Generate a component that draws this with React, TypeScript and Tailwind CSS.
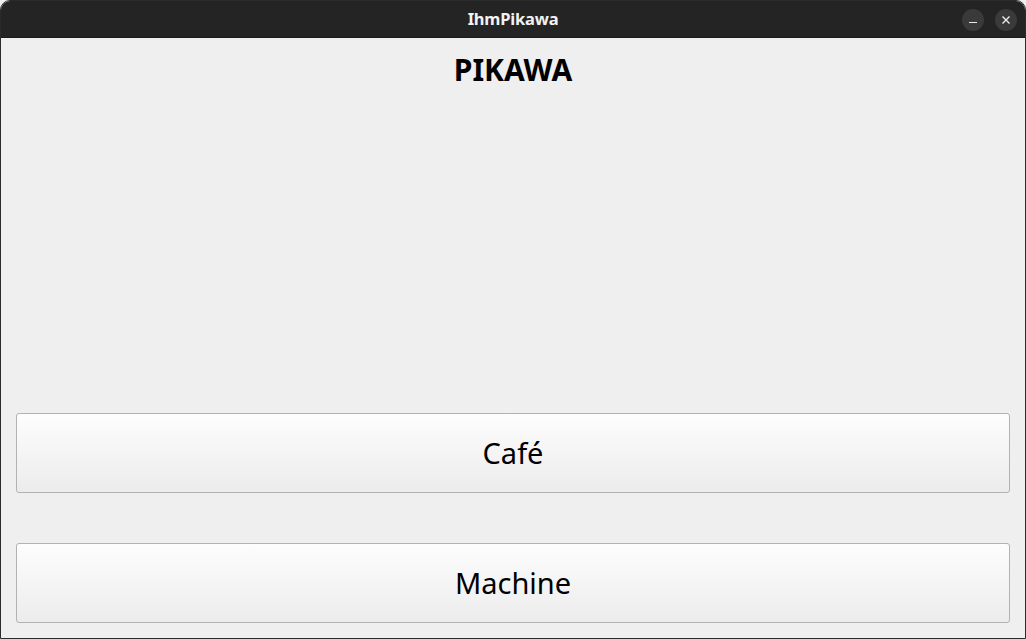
export default function App() {
  return (
    <div
      className="h-[639px] w-[1026px] bg-[#efefef]"
      style={{ fontFamily: '"Noto Sans", "Open Sans", sans-serif' }}
    >
      <div className="flex h-full w-full flex-col overflow-hidden rounded-t-[10px] border border-[#2b2b2b] bg-[#efefef]">
        {/* title bar */}
        <div className="relative flex h-[37px] shrink-0 items-center justify-center border-b border-[#1a1a1a] bg-[#242424]">
          <span className="text-[16.5px] font-bold tracking-[-0.2px] text-[#f2f2f2]">IhmPikawa</span>
          <div className="absolute right-[8px] top-[8px] flex gap-[11px]">
            <button className="flex h-[22px] w-[22px] items-center justify-center rounded-full bg-[#3a3a3a]">
              <span className="mt-[5px] block h-[1.5px] w-[8px] bg-[#e8e8e8]" />
            </button>
            <button className="flex h-[22px] w-[22px] items-center justify-center rounded-full bg-[#3a3a3a]">
              <svg width="10" height="10" viewBox="0 0 10 10">
                <path d="M1.5 1.5 L8.5 8.5 M8.5 1.5 L1.5 8.5" stroke="#ececec" strokeWidth="1.4" />
              </svg>
            </button>
          </div>
        </div>

        {/* content */}
        <div className="flex flex-1 flex-col px-[15px] pb-[15px]">
          <h1 className="mt-[15px] text-center text-[30px] font-bold leading-[34px] text-black">PIKAWA</h1>
          <div className="flex-1" />
          <div className="flex flex-col gap-[50px]">
            <button className="h-[80px] w-full rounded-[3px] border border-[#b2b2b2] bg-gradient-to-b from-[#fdfdfd] to-[#ececec] text-[29px] text-black">
              Café
            </button>
            <button className="h-[80px] w-full rounded-[3px] border border-[#b2b2b2] bg-gradient-to-b from-[#fdfdfd] to-[#ececec] text-[29px] text-black">
              Machine
            </button>
          </div>
        </div>
      </div>
    </div>
  );
}
